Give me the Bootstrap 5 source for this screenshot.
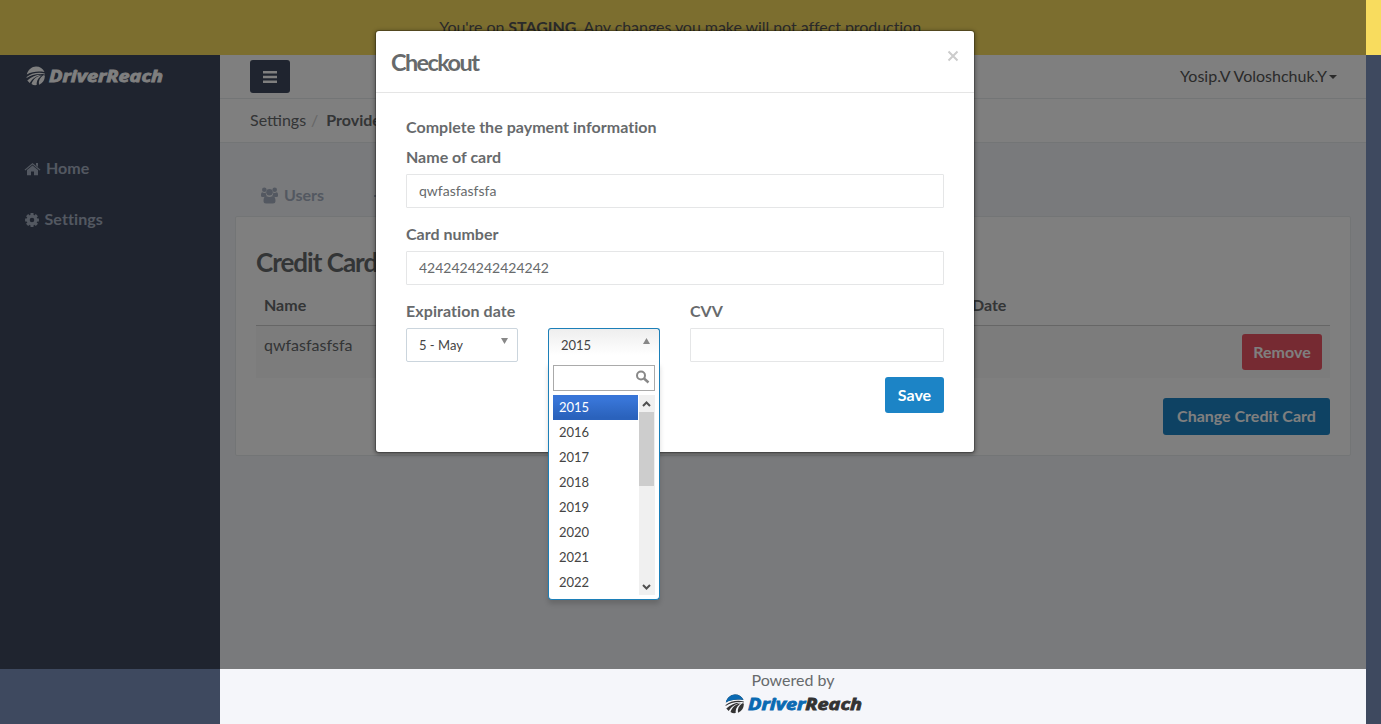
<!DOCTYPE html>
<html lang="en">
<head>
<meta charset="utf-8">
<title>DriverReach - Checkout</title>
<link href="https://cdn.jsdelivr.net/npm/bootstrap@5.3.0/dist/css/bootstrap.min.css" rel="stylesheet">
<style>
body{font-family:Lato,"Liberation Sans",sans-serif;font-size:16px;line-height:23px;color:#676a6c;background:#3e495f;height:724px;overflow:hidden}
b,strong,th,.fw-bold{font-weight:700}
.staging{height:55px;background:#f8dc5e;color:#555;padding:0 19px 2px 0}
.staging div{letter-spacing:-.06px;padding-left:2px}
.shell{height:669px;margin-right:15px}
.side{width:220px;flex:none;padding:9px 0 0 24px}
.side-link{color:#a7b1c2;height:51px}
.side-link span{padding-bottom:2px}
.topbar{height:44px;border-bottom:1px solid #e7eaec;padding:0 29px 0 30px}
.menu-btn{width:40px;height:33px;background:#3e495f;border-radius:3px}
.crumbs{height:44px;border-bottom:1px solid #e7eaec;padding:0 0 2px 30px}
.work{background:#f3f5f8;padding:43px 15px 0}
.tabline{height:30px;padding-left:25px;color:#a7b1c2}
.panel{height:240px;border:1px solid #e7eaec;border-radius:2px;padding:30px 20px 0}
.title{font-size:26px;line-height:30px;letter-spacing:-1px;font-weight:700;margin:0}
.cc{--bs-table-color:#676a6c;margin:0 0 20px;table-layout:fixed}
.cc th{height:48px;padding:0 8px 9px;border-bottom:1px solid #ccc;line-height:23px;vertical-align:bottom}
.cc td{height:52px;padding:7px 8px 8px;border:0;background:#f9f9f9}
.cc td .cbtn{margin-top:1px}
.cbtn{color:#fff;font-weight:700;border:0;border-radius:3px;padding:0;height:36px;line-height:36px;font-size:16px}
.cbtn:hover{color:#fff}
.blue{background:#1c84c6}.red{background:#ed5565}
.foot{height:55px;background:#f5f6fa}
.shade{top:0;left:0;width:1366px;height:669px;background:rgba(0,0,0,.5);z-index:5}
.dialog{top:30px;left:375px;width:600px;height:423px;border:1px solid rgba(0,0,0,.2);border-radius:4px;background:#fff;background-clip:padding-box;box-shadow:0 1px 4px rgba(0,0,0,.4);z-index:6}
.dialog-head{height:62px;border-bottom:1px solid #e5e5e5;padding:0 15px}
.dialog-head h4{font-size:23.500px;line-height:30px;letter-spacing:-1.600px;font-weight:700;margin:0}
.dialog-body{padding:22px 30px 0}
.lbl{display:block;font-weight:700;margin:0 0 6px}
.box{height:34px;border:1px solid #e5e6e7;border-radius:1px;padding:0 12px 2px;font-size:14px;line-height:30px;color:#676a6c;box-shadow:none}
.pick{width:112px;height:34px;border:1px solid #cbd5dd;border-radius:2px;padding:0 9px 0 12px;font-size:13px;line-height:32px;color:#444}
.pick.open{border-color:#1c7fb8;border-bottom:0;border-radius:3px 3px 0 0;background:linear-gradient(#eee,#fff 80%)}
.drop{top:34px;left:0;width:112px;height:238px;border:1px solid #1c7fb8;border-top:0;border-radius:0 0 4px 4px;background:#fff;box-shadow:0 4px 5px rgba(0,0,0,.15);font-size:13px;color:#444;padding:3px 4px 4px}
.find{height:26px;border:1px solid #aaa;padding:0 4px 2px 0}
.opts{margin-top:4px;height:200px}
.opts .opt{height:25px;line-height:24px;padding-left:6px}
.opts .sel{background:linear-gradient(#3875d7 20%,#2a62bc 90%);color:#fff}
.bar{width:16px;background:#f0f0f0}
.thumb{height:74px;width:15px;background:#cdcdcd}
svg{display:block;flex:none}
</style>
</head>
<body>
<svg width="0" height="0" class="position-absolute">
  <defs>
    <g id="road">
      <path d="M.8 8.500C2 3.500 6 .5 10 .5c4 0 7 2 8.500 5.500C12 5 6.500 5.500.8 8.500Z"/>
      <path d="M.6 11C5 7.500 12 5.800 18.800 7.500l.1 1C12 7.300 6 8.500.6 12Z"/>
      <path d="M1.300 14.500C6 10 11 8.300 16 8.700 10 10 6.500 12.500 3.700 17Z"/>
      <path d="M5.500 18C7 13 11 10 16 9.200c-4 3-5.500 5.500-5.300 9.900C8.500 19.400 7 19 5.500 18Z"/>
      <path d="M13 18.800c-.8-3.800.8-7 4.200-9.500l1.600.3c.2 4.200-2.200 7.900-5.800 9.200Z"/>
    </g>
  </defs>
</svg>

<div class="staging d-flex align-items-center justify-content-center"><div>You're on <strong>STAGING</strong>. Any changes you make will not affect production.</div></div>

<div class="shell d-flex">
  <nav class="side">
    <svg width="140" height="24" fill="#fff"><use href="#road" x="2" y="2"/><text x="25" y="17.500" font-family="Open Sans" font-size="16.500" font-weight="700" font-style="italic" stroke="#fff" stroke-width=".8" textLength="114" lengthAdjust="spacingAndGlyphs">DriverReach</text></svg>
    <div class="fw-bold" style="padding-top:55px">
      <div class="side-link d-flex align-items-center">
        <svg width="17" height="14" viewBox="0 0 17 14" fill="#a7b1c2"><path d="M8.500 3.400 14 8v5.200H10V9.400H7v3.800H3V8ZM8.500 1 16.500 7.700l-.8.9L8.500 2.600 1.300 8.600l-.8-.9ZM12 .9h2V5l-2-1.700Z"/></svg>
        <span style="margin-left:5px">Home</span></div>
      <div class="side-link d-flex align-items-center">
        <svg width="16" height="16" viewBox="-8 -8 16 16"><circle r="3.900" fill="none" stroke="#a7b1c2" stroke-width="3.200"/><path d="M0-6.900V-5M0 5v1.900M-6.900 0H-5M5 0h1.900M-4.900-4.900-3.600-3.600M3.600 3.600 4.900 4.900M-4.900 4.900-3.600 3.600M3.600-3.600 4.900-4.900" stroke="#a7b1c2" stroke-width="3"/></svg>
        <span style="letter-spacing:.1px;margin-left:4.500px">Settings</span></div>
    </div>
  </nav>
  <div class="flex-grow-1 d-flex flex-column">
    <div class="topbar bg-white d-flex align-items-center justify-content-between">
      <div class="menu-btn d-flex align-items-center justify-content-center"><svg width="14" height="12" fill="#fff"><path d="M0 0h14v2.500H0zM0 4.700h14v2.500H0zM0 9.400h14v2.500H0z"/></svg></div>
      <div class="d-flex align-items-center" style="color:#555"><span style="padding-bottom:2px">Yosip.V Voloshchuk.Y</span><svg width="8" height="4" fill="#555" style="margin-left:2px"><path d="M0 0h8L4 4Z"/></svg></div>
    </div>
    <div class="crumbs bg-white d-flex align-items-center"><span>Settings</span><span style="color:#ccc;padding:0 8px 0 5px">/</span><b>Providers</b></div>
    <div class="work flex-grow-1">
      <div class="tabline d-flex fw-bold">
        <svg width="17" height="17" viewBox="0 0 17 17" fill="#a7b1c2" style="margin:1px 0 0 1px"><circle cx="3.300" cy="2.800" r="2.300"/><circle cx="13.700" cy="2.800" r="2.300"/><circle cx="8.500" cy="5.300" r="3.300"/><path d="M0 9V7.500Q0 5.300 1.500 5.300q1.500 1 3.200.3Q4.700 8 6 9 4 9.200 3.300 10H1.500Q0 10 0 9ZM17 9V7.500q0-2.200-1.500-2.200-1.500 1-3.200.3Q12.300 8 11 9q2 .2 2.700 1h1.800Q17 10 17 9ZM2.500 14c0-3 .8-5 3-5q3 2 6 0c2.200 0 3 2 3 5 0 1.700-1 2.500-2.500 2.500H5Q2.500 16.500 2.500 14Z"/></svg>
        <span style="padding-left:6px;margin-top:-3px">Users</span>
        <svg width="16" height="16" fill="none" stroke="#a7b1c2" stroke-width="2" style="margin-left:50px;margin-top:2px"><path d="M0 8h12"/></svg>
      </div>
      <div class="panel bg-white">
        <h2 class="title">Credit Card</h2>
        <table class="table cc">
          <thead><tr><th style="width:631px">Name</th><th>Expiration Date</th><th></th></tr></thead>
          <tbody><tr><td>qwfasfasfsfa</td><td></td><td><button class="btn cbtn red float-end" style="width:80px">Remove</button></td></tr></tbody>
        </table>
        <button class="btn cbtn blue float-end" style="width:167px;height:37px">Change Credit Card</button>
      </div>
    </div>
    <footer class="foot d-flex flex-column align-items-center">
      <div style="margin-top:-1px">Powered by</div>
      <svg width="140" height="24"><g fill="#333"><use href="#road" x="2" y="3"/></g><path d="M2.800 11.500C4 6.500 8 3.500 12 3.500c4 0 7 2 8.500 5.500C14 8 8.500 8.500 2.800 11.500Z" fill="#0a6ab2"/><text x="25" y="18.500" font-family="Open Sans" font-size="16.500" font-weight="700" font-style="italic" fill="#333" stroke="#333" stroke-width=".8" textLength="114" lengthAdjust="spacingAndGlyphs"><tspan fill="#0a6ab2" stroke="#0a6ab2">Driver</tspan>Reach</text></svg>
    </footer>
  </div>
</div>

<div class="shade position-absolute"></div>

<div class="dialog position-absolute">
  <div class="dialog-head d-flex align-items-center justify-content-between"><h4>Checkout</h4>
    <svg width="12" height="12" fill="none" stroke="#ccc" stroke-width="2" style="margin-top:-11px"><path d="m1.500 1.500 9 9m0-9-9 9"/></svg></div>
  <div class="dialog-body">
    <div class="fw-bold" style="margin-bottom:7px;letter-spacing:.03px">Complete the payment information</div>
    <label class="lbl">Name of card</label>
    <input class="form-control box" value="qwfasfasfsfa" style="margin-bottom:14px">
    <label class="lbl">Card number</label>
    <input class="form-control box" value="4242424242424242" style="margin-bottom:14px">
    <div class="d-flex">
      <div style="width:284px">
        <label class="lbl" style="letter-spacing:.08px">Expiration date</label>
        <div class="d-flex" style="gap:30px">
          <div class="pick d-flex justify-content-between"><span>5 - May</span><svg width="7" height="6" fill="#888" style="margin-top:9px"><path d="M0 0h7L3.500 6Z"/></svg></div>
          <div class="position-relative">
            <div class="pick open d-flex justify-content-between"><span>2015</span><svg width="7" height="6" fill="#888" style="margin-top:9px"><path d="M0 6h7L3.500 0Z"/></svg></div>
            <div class="drop position-absolute">
              <div class="find d-flex align-items-center justify-content-end"><svg width="15" height="14" fill="none" stroke="#888" stroke-width="2"><circle cx="6" cy="5.500" r="4"/><path d="m9 8.500 4.500 4" stroke-width="2.400"/></svg></div>
              <div class="opts d-flex">
                <div style="width:85px"><div class="opt sel">2015</div><div class="opt">2016</div><div class="opt">2017</div><div class="opt">2018</div><div class="opt">2019</div><div class="opt">2020</div><div class="opt">2021</div><div class="opt">2022</div></div>
                <div class="bar ms-auto d-flex flex-column">
                  <svg width="15" height="17" fill="none" stroke="#505050" stroke-width="2"><path d="m4 11 3.500-3.500L11 11"/></svg>
                  <div class="thumb"></div>
                  <svg class="mt-auto" width="15" height="17" fill="none" stroke="#505050" stroke-width="2"><path d="m4 7 3.500 3.500L11 7"/></svg>
                </div>
              </div>
            </div>
          </div>
        </div>
      </div>
      <div class="flex-grow-1"><label class="lbl">CVV</label><input class="form-control box"></div>
    </div>
    <button class="btn cbtn blue float-end" style="width:59px;margin-top:15px">Save</button>
  </div>
</div>
<script src="https://cdn.jsdelivr.net/npm/bootstrap@5.3.0/dist/js/bootstrap.bundle.min.js"></script>
</body>
</html>
